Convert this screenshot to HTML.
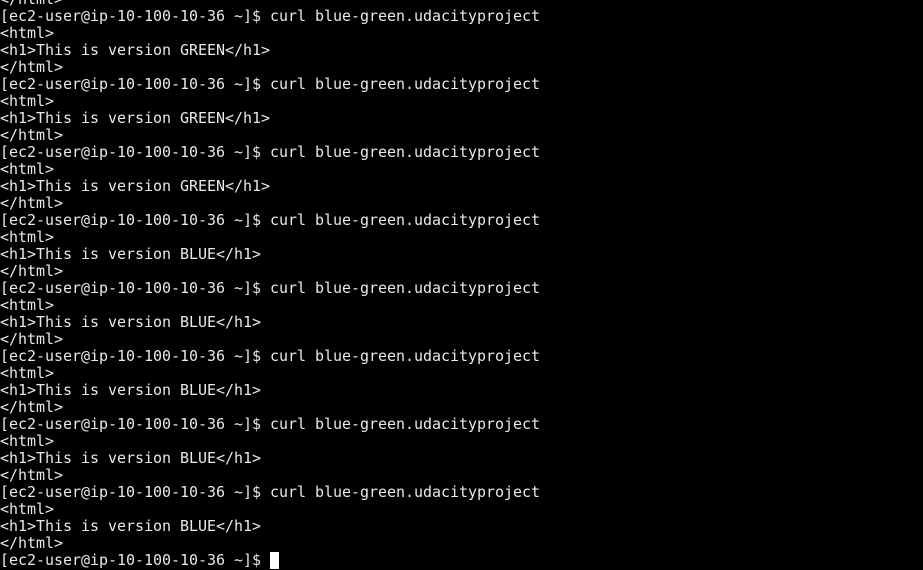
<!DOCTYPE html>
<html><head><meta charset="utf-8"><style>
html,body{margin:0;padding:0;background:#000;width:923px;height:570px;overflow:hidden}
pre{margin:0;position:absolute;left:0;top:-9px;font-family:"DejaVu Sans Mono","Liberation Mono",monospace;font-size:15px;line-height:17px;letter-spacing:-0.03px;color:#e8e8e8;white-space:pre}
.cur{display:inline-block;width:9px;height:17px;background:#fff;vertical-align:top}
</style></head><body><pre>&lt;/html&gt;
[ec2-user@ip-10-100-10-36 ~]$ curl blue-green.udacityproject
&lt;html&gt;
&lt;h1&gt;This is version GREEN&lt;/h1&gt;
&lt;/html&gt;
[ec2-user@ip-10-100-10-36 ~]$ curl blue-green.udacityproject
&lt;html&gt;
&lt;h1&gt;This is version GREEN&lt;/h1&gt;
&lt;/html&gt;
[ec2-user@ip-10-100-10-36 ~]$ curl blue-green.udacityproject
&lt;html&gt;
&lt;h1&gt;This is version GREEN&lt;/h1&gt;
&lt;/html&gt;
[ec2-user@ip-10-100-10-36 ~]$ curl blue-green.udacityproject
&lt;html&gt;
&lt;h1&gt;This is version BLUE&lt;/h1&gt;
&lt;/html&gt;
[ec2-user@ip-10-100-10-36 ~]$ curl blue-green.udacityproject
&lt;html&gt;
&lt;h1&gt;This is version BLUE&lt;/h1&gt;
&lt;/html&gt;
[ec2-user@ip-10-100-10-36 ~]$ curl blue-green.udacityproject
&lt;html&gt;
&lt;h1&gt;This is version BLUE&lt;/h1&gt;
&lt;/html&gt;
[ec2-user@ip-10-100-10-36 ~]$ curl blue-green.udacityproject
&lt;html&gt;
&lt;h1&gt;This is version BLUE&lt;/h1&gt;
&lt;/html&gt;
[ec2-user@ip-10-100-10-36 ~]$ curl blue-green.udacityproject
&lt;html&gt;
&lt;h1&gt;This is version BLUE&lt;/h1&gt;
&lt;/html&gt;
[ec2-user@ip-10-100-10-36 ~]$ <span class="cur"></span></pre></body></html>
